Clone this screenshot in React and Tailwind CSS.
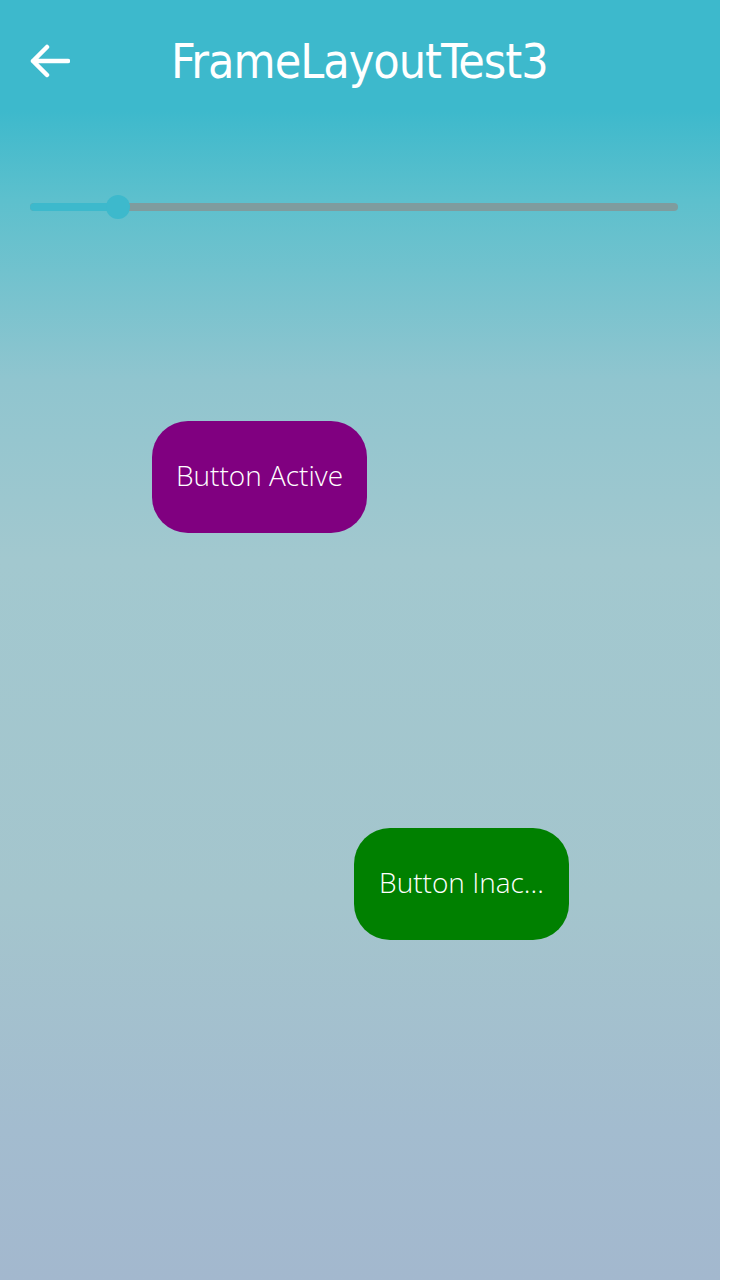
import React from 'react'

const App = () => {
  return (
    <div className="flex w-[736px] h-[1280px] bg-white">
      <div
        className="relative w-[720px] h-[1280px] bg-[#a2c8cf]"
        style={{ backgroundImage: 'linear-gradient(to bottom, #3db9cc 0px, #3db9cc 110px, #5dc0cd 200px, #90c5cf 380px, #a2c8cf 560px, #a4c5cd 900px, #a3bccf 1130px, #a3b8ce 1280px)' }}
      >
        {/* Header */}
        <div className="flex items-center h-[116px] px-[30px]">
          <svg width="40" height="34" viewBox="0 0 40 34" className="shrink-0 mt-[6px]">
            <path d="M3 17 H38 M17 3 L3 17 L17 31" stroke="white" strokeWidth="4.5" strokeLinecap="round" strokeLinejoin="round" fill="none" />
          </svg>
          <h1 className="ml-[101px] mt-[6px] text-white text-[48px] font-[DejaVu_Sans_Condensed,sans-serif] tracking-[-1px] font-normal">
            FrameLayoutTest3
          </h1>
        </div>

        {/* Slider */}
        <div className="relative mt-[87px] mx-[30px] h-[8px] w-[648px] rounded-full bg-[#7f9c9e]">
          <div className="h-[8px] w-[90px] rounded-full bg-[#3db9cc]" />
          <div className="absolute left-[76px] top-[-8px] w-[24px] h-[24px] rounded-full bg-[#3db9cc]" />
        </div>

        {/* Buttons */}
        <button className="flex items-center justify-center mt-[210px] ml-[152px] w-[215px] h-[112px] rounded-[36px] bg-[#800080] text-white text-[28px] font-light font-['Open_Sans',sans-serif] pb-[4px]">
          Button Active
        </button>
        <button className="flex items-center justify-center mt-[295px] ml-[354px] w-[215px] h-[112px] rounded-[36px] bg-[#008000] text-white text-[28px] font-light font-['Open_Sans',sans-serif] pb-[4px]">
          Button Inac...
        </button>
      </div>
    </div>
  )
}

export default App
